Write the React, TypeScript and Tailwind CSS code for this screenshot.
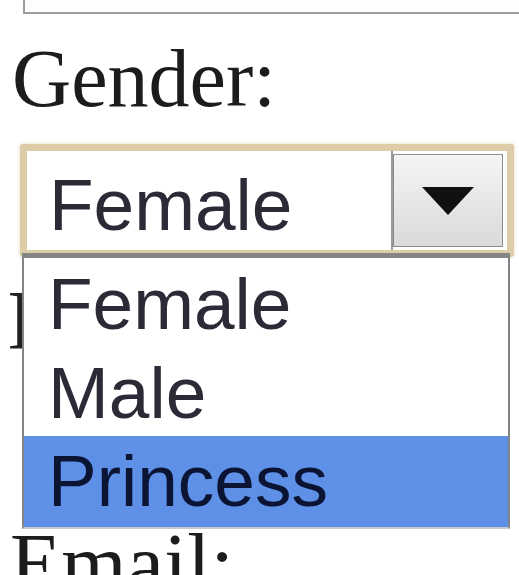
import * as React from "react";

const options = ["Female", "Male", "Princess"];

function Option({ label, active }: { label: string; active: boolean }) {
  return (
    <li
      className={
        active
          ? "h-[91px] pl-[24px] pt-[5px] bg-[#5e90e8] text-[#0b1433]"
          : "h-[89px] pl-[24px] pt-[6px] bg-white text-[#2b2b38]"
      }
    >
      {label}
    </li>
  );
}

function GenderSelect() {
  return (
    <div className="relative ml-[20px] w-[494px] h-[113px] rounded-[3px] bg-[#dccca8] p-[7px] shadow-[0_0_4px_#e8dcc4]">
      <div className="flex h-full bg-white">
        <div className="flex-1 pl-[22px] pt-[18px] text-[73px] leading-[72px] text-[#2b2b38] border-r-2 border-[#9a9a9a]">
          Female
        </div>
        <div className="mt-[3px] mb-[3px] mr-[4px] w-[110px] grid place-content-center border border-[#8c8c8c] bg-gradient-to-b from-[#f5f5f5] to-[#dadada]">
          <svg width="56" height="32" viewBox="0 0 56 32">
            <path d="M2 2 L54 2 L28 30 Z" fill="#111" />
          </svg>
        </div>
      </div>
      <ul className="absolute left-[2px] top-[109px] w-[488px] border-x-2 border-t-[5px] border-b-2 border-[#858585] border-b-[#c9c9d2] bg-white text-[73px] leading-[80px]">
        {options.map((o) => (
          <Option key={o} label={o} active={o === "Princess"} />
        ))}
      </ul>
    </div>
  );
}

export default function App() {
  return (
    <div
      className="relative w-[519px] h-[575px] overflow-hidden bg-white"
      style={{ fontFamily: '"Liberation Sans", Arial, sans-serif' }}
    >
      <div className="ml-[23px] h-[14px] border-l-2 border-b-2 border-[#9c9c9c] bg-[#fdfdfd]" />
      <div className="ml-[12px] mt-[23px] mb-[23px] h-[84px] text-[82px] leading-[84px] text-[#1c1c1c] font-['Liberation_Serif',serif]">
        Gender:
      </div>
      <GenderSelect />
      <div className="ml-[7px] mt-[21px] h-[84px] text-[85px] leading-[84px] text-[#222] font-['Liberation_Serif',serif]">
        I
      </div>
      <div className="ml-[10px] mt-[160px] h-[84px] text-[84px] leading-[84px] text-[#1c1c1c] font-['Liberation_Serif',serif]">
        Email:
      </div>
    </div>
  );
}
